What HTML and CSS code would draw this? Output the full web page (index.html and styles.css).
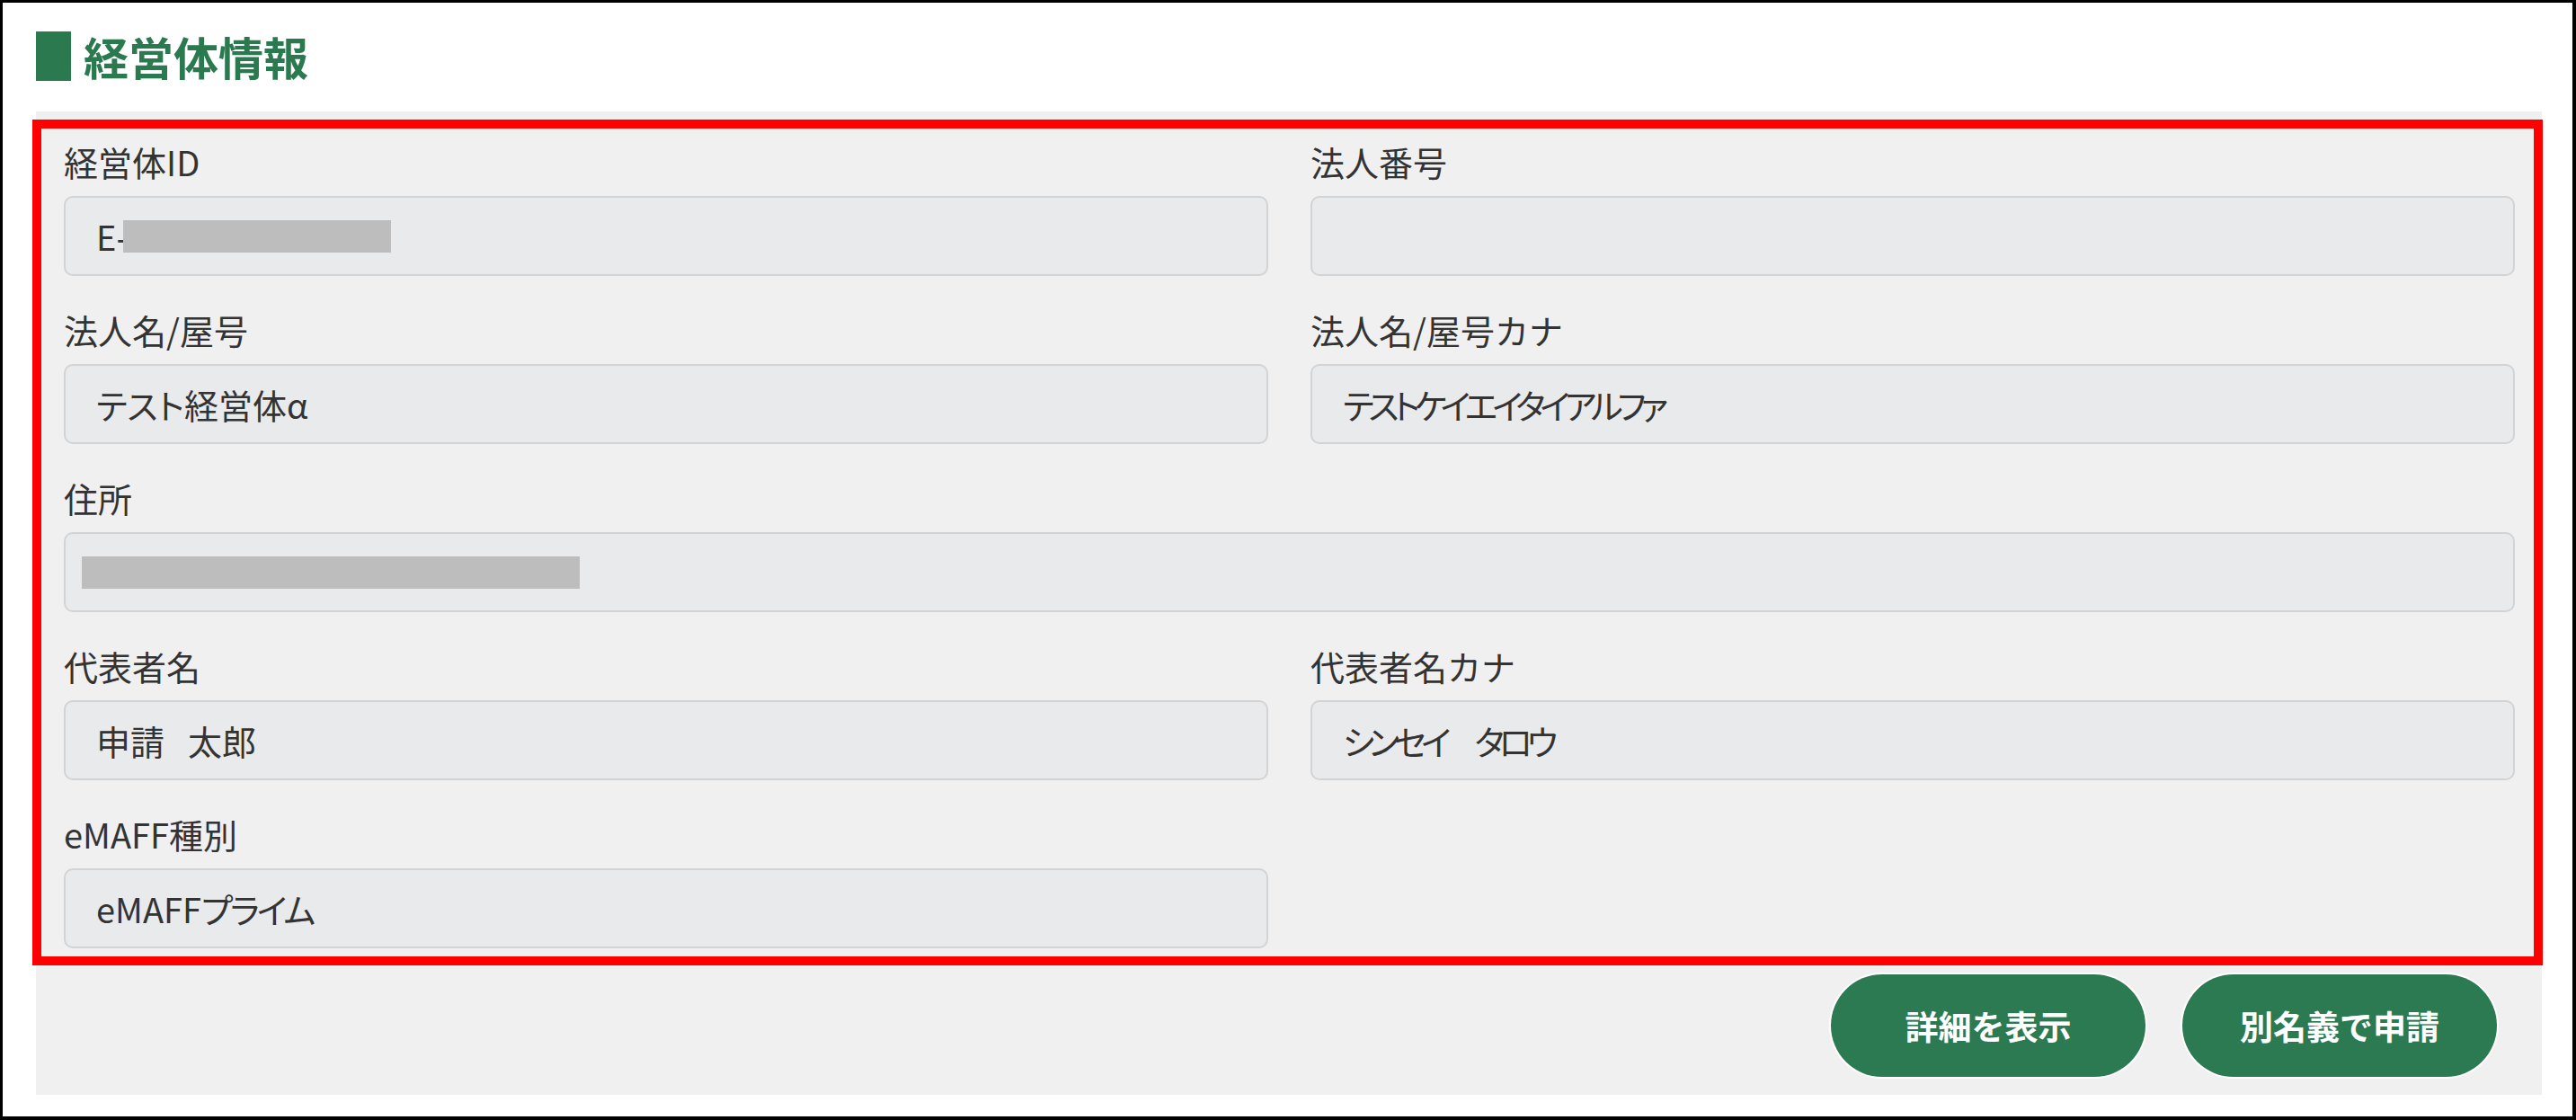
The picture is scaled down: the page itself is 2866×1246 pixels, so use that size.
FILE: index.html
```html
<!DOCTYPE html>
<html lang="ja">
<head>
<meta charset="utf-8">
<title>経営体情報</title>
<link rel="stylesheet" href="styles.css">
</head>
<body>
<div class="frame">
  <h1 class="title"><span class="title-mark"></span><span class="title-text">経営体情報</span></h1>
  <section class="panel">
    <div class="fields">
      <div class="field">
        <div class="label">経営体ID</div>
        <div class="box"><span>E-</span><span class="redact redact-id"></span></div>
      </div>
      <div class="field">
        <div class="label">法人番号</div>
        <div class="box"></div>
      </div>
      <div class="field">
        <div class="label">法人名/屋号</div>
        <div class="box">テスト経営体α</div>
      </div>
      <div class="field">
        <div class="label">法人名/屋号カナ</div>
        <div class="box"><span class="kana">テストケイエイタイアルファ</span></div>
      </div>
      <div class="field wide">
        <div class="label">住所</div>
        <div class="box box-addr"><span class="redact redact-addr"></span></div>
      </div>
      <div class="field">
        <div class="label">代表者名</div>
        <div class="box">申請<span class="gap">　</span>太郎</div>
      </div>
      <div class="field">
        <div class="label">代表者名カナ</div>
        <div class="box"><span class="kana">シンセイ　タロウ</span></div>
      </div>
      <div class="field">
        <div class="label">eMAFF種別</div>
        <div class="box">eMAFF<span class="kana-soft">プライム</span></div>
      </div>
    </div>
    <div class="actions">
      <button class="btn">詳細を表示</button>
      <button class="btn">別名義で申請</button>
    </div>
    <div class="highlight"></div>
  </section>
</div>
</body>
</html>
```

FILE: styles.css
```css
html, body {
  margin: 0;
  padding: 0;
  background: #ffffff;
}

body {
  font-family: "Noto Sans CJK JP", "Noto Sans", sans-serif;
  color: #333333;
}

.frame {
  box-sizing: border-box;
  width: 2866px;
  height: 1246px;
  border-style: solid;
  border-color: #000000;
  border-width: 3px 4px 4px 3px;
  padding: 32px 34px 0 37px;
  background: #ffffff;
}

.title {
  display: flex;
  align-items: center;
  margin: 0;
  height: 55px;
}

.title-mark {
  width: 39px;
  height: 55px;
  background: #2b7a4f;
  margin-right: 14px;
}

.title-text {
  font-size: 50px;
  line-height: 55px;
  font-weight: 700;
  color: #2b7a4f;
  letter-spacing: 0;
}

.panel {
  position: relative;
  margin-top: 34px;
  background: #f0f0f0;
  padding: 31px 30px 20px 31px;
}

.fields {
  display: grid;
  grid-template-columns: 1fr 1fr;
  column-gap: 47px;
  row-gap: 35px;
}

.field.wide {
  grid-column: 1 / 3;
}

.label {
  font-size: 38px;
  line-height: 50px;
  margin-bottom: 13px;
  color: #333333;
}

.box {
  box-sizing: border-box;
  height: 89px;
  display: flex;
  align-items: center;
  padding-left: 34px;
  background: #e9eaec;
  border: 2px solid #d2d3d5;
  border-radius: 10px;
  font-size: 38px;
  color: #333333;
  white-space: pre;
  font-feature-settings: "palt" 1;
}

.kana {
  letter-spacing: -6px;
}

.kana-soft {
  letter-spacing: -3px;
}

.gap {
  letter-spacing: -12px;
}

.box-addr {
  padding-left: 18px;
}

.redact {
  display: inline-block;
  background: #bdbdbd;
  height: 36px;
}

.redact-id {
  width: 298px;
  margin-left: -6px;
}

.redact-addr {
  width: 554px;
}

.actions {
  display: flex;
  justify-content: flex-end;
  gap: 41px;
  margin-top: 29px;
  margin-right: 20px;
}

.btn {
  width: 350px;
  height: 114px;
  border: none;
  border-radius: 57px;
  background: #2b7a51;
  color: #ffffff;
  font-family: "Noto Sans CJK JP", "Noto Sans", sans-serif;
  font-size: 37px;
  font-weight: 700;
  padding: 0;
  box-shadow: 0 0 0 2px #ffffff;
}

.highlight {
  position: absolute;
  left: -4px;
  top: 9px;
  width: 2793px;
  height: 941px;
  box-sizing: border-box;
  border: 10px solid #ff0000;
  pointer-events: none;
}
```
